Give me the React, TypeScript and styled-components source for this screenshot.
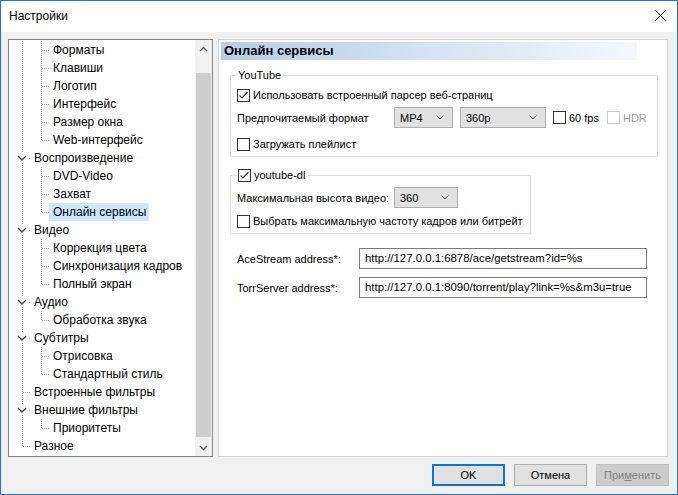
import React from "react";
import styled, { createGlobalStyle } from "styled-components";

const GlobalStyle = createGlobalStyle`
  html, body { margin: 0; padding: 0; background: #ffffff; }
  body {
    font-family: "Liberation Sans", Arial, sans-serif;
    font-size: 12px;
    color: #000;
  }
  * { box-sizing: border-box; }
`;

type TreeNode = {
  label: string;
  level: number;
  expander?: boolean;
  last?: boolean;
  selected?: boolean;
};

const tree: TreeNode[] = [
  { label: "Форматы", level: 1 },
  { label: "Клавиши", level: 1 },
  { label: "Логотип", level: 1 },
  { label: "Интерфейс", level: 1 },
  { label: "Размер окна", level: 1 },
  { label: "Web-интерфейс", level: 1, last: true },
  { label: "Воспроизведение", level: 0, expander: true },
  { label: "DVD-Video", level: 1 },
  { label: "Захват", level: 1 },
  { label: "Онлайн сервисы", level: 1, last: true, selected: true },
  { label: "Видео", level: 0, expander: true },
  { label: "Коррекция цвета", level: 1 },
  { label: "Синхронизация кадров", level: 1 },
  { label: "Полный экран", level: 1, last: true },
  { label: "Аудио", level: 0, expander: true },
  { label: "Обработка звука", level: 1, last: true },
  { label: "Субтитры", level: 0, expander: true },
  { label: "Отрисовка", level: 1 },
  { label: "Стандартный стиль", level: 1, last: true },
  { label: "Встроенные фильтры", level: 0 },
  { label: "Внешние фильтры", level: 0, expander: true },
  { label: "Приоритеты", level: 1, last: true },
  { label: "Разное", level: 0, last: true },
];

const Window = styled.div`
  width: 678px;
  height: 495px;
  border: 1px solid #1e74cf;
  display: flex;
  flex-direction: column;
  background: #f0f0f0;
`;

const TitleBar = styled.div`
  height: 31px;
  background: #ffffff;
  display: flex;
  align-items: center;
  justify-content: space-between;
  padding: 0 11px 2px 8px;
  font-size: 12px;
`;

const Body = styled.div`
  display: flex;
  gap: 5px;
  padding: 7px 9px 0 7px;
  height: 425px;
`;

const TreePanel = styled.div`
  width: 205px;
  height: 418px;
  border: 1px solid #828790;
  background: #fff;
  display: flex;
`;

const TreeList = styled.div`
  flex: 1;
  padding: 1px 0 0 3px;
`;

const TreeRow = styled.div`
  display: flex;
  height: 18px;
  align-items: center;
`;

const Cell = styled.svg`
  display: block;
  flex: none;
`;

const TreeLabel = styled.span<{ $selected?: boolean }>`
  height: 18px;
  line-height: 18px;
  padding: 0 3px 0 4px;
  white-space: nowrap;
  background: ${(p) => (p.$selected ? "#cce8ff" : "transparent")};
`;

const ScrollBar = styled.div`
  width: 17px;
  background: #f0f0f0;
  display: flex;
  flex-direction: column;
`;

const ScrollArrow = styled.div`
  height: 17px;
  display: flex;
  align-items: center;
  justify-content: center;
`;

const ScrollTrack = styled.div`
  flex: 1;
  display: flex;
  padding: 16px 1px 2px 1px;
`;

const ScrollThumb = styled.div`
  flex: 1;
  background: #cdcdcd;
`;

const Page = styled.div`
  width: 450px;
  height: 418px;
  border: 1px solid #d4d4d4;
  background: #ffffff;
  padding: 2px;
  font-size: 11px;
`;

const PageHeader = styled.div`
  width: 416px;
  height: 18px;
  line-height: 18px;
  padding-left: 3px;
  font-weight: bold;
  font-size: 13px;
  background: linear-gradient(to right, #b6cde8, #f4f8fc);
`;

const Group = styled.fieldset<{ $width: number; $top: number }>`
  width: ${(p) => p.$width}px;
  margin: ${(p) => p.$top}px 0 0 9px;
  padding: 0 6px 3px 6px;
  border: 1px solid #dcdcdc;
  min-width: 0;
`;

const Legend = styled.legend`
  padding: 0 2px 0 1px;
  height: 14px;
  line-height: 14px;
  display: flex;
  align-items: center;
  gap: 3px;
`;

const Row = styled.div<{ $top: number; $h?: number }>`
  display: flex;
  align-items: center;
  height: ${(p) => p.$h ?? 18}px;
  margin-top: ${(p) => p.$top}px;
`;

const FieldLabel = styled.span<{ $width: number }>`
  width: ${(p) => p.$width}px;
  flex: none;
  white-space: nowrap;
`;

const CheckLabel = styled.label<{ $disabled?: boolean; $gap?: number }>`
  display: flex;
  align-items: center;
  gap: 3px;
  margin-left: ${(p) => p.$gap ?? 0}px;
  white-space: nowrap;
  color: ${(p) => (p.$disabled ? "#a0a0a0" : "#000")};
`;

const Box = styled.span<{ $disabled?: boolean }>`
  width: 13px;
  height: 13px;
  flex: none;
  border: 1px solid ${(p) => (p.$disabled ? "#cccccc" : "#333333")};
  background: #fff;
  display: flex;
  align-items: center;
  justify-content: center;
`;

const Combo = styled.div<{ $width: number; $gap?: number }>`
  width: ${(p) => p.$width}px;
  height: 21px;
  flex: none;
  margin-left: ${(p) => p.$gap ?? 0}px;
  border: 1px solid #adadad;
  background: #e1e1e1;
  display: flex;
  align-items: center;
  justify-content: space-between;
  padding: 0 8px 0 5px;
`;

const AddressBlock = styled.div`
  margin: 14px 0 0 16px;
  display: flex;
  flex-direction: column;
  gap: 8px;
`;

const TextInput = styled.div`
  width: 288px;
  height: 21px;
  border: 1px solid #7a7a7a;
  background: #fff;
  padding: 0 5px;
  line-height: 19px;
  font-size: 11.4px;
  white-space: nowrap;
  overflow: hidden;
`;

const Footer = styled.div`
  display: flex;
  justify-content: flex-end;
  gap: 9px;
  padding: 7px 8px 8px 0;
  font-size: 11px;
`;

const Button = styled.div<{ $variant?: "default" | "disabled" }>`
  width: 73px;
  height: 22px;
  display: flex;
  align-items: center;
  justify-content: center;
  background: ${(p) => (p.$variant === "disabled" ? "#cccccc" : "#e1e1e1")};
  color: ${(p) => (p.$variant === "disabled" ? "#838383" : "#000")};
  border: ${(p) =>
    p.$variant === "default"
      ? "2px solid #0078d7"
      : p.$variant === "disabled"
      ? "1px solid #bfbfbf"
      : "1px solid #adadad"};
`;

const Chevron = ({ up }: { up?: boolean }) => (
  <svg width="9" height="6" viewBox="0 0 9 6">
    <polyline
      points={up ? "1,5 4.5,1.5 8,5" : "1,1 4.5,4.5 8,1"}
      fill="none"
      stroke="#606060"
      strokeWidth="1.4"
    />
  </svg>
);

const ComboArrow = () => (
  <svg width="8" height="5" viewBox="0 0 8 5">
    <polyline points="0.5,0.5 4,4 7.5,0.5" fill="none" stroke="#606060" strokeWidth="1" />
  </svg>
);

const Check = ({ checked, disabled }: { checked?: boolean; disabled?: boolean }) => (
  <Box $disabled={disabled}>
    {checked && (
      <svg width="11" height="11" viewBox="0 0 11 11">
        <polyline points="1.5,5.5 4,8 9.5,2" fill="none" stroke="#333" strokeWidth="1.2" />
      </svg>
    )}
  </Box>
);

const dots = { stroke: "#a0a0a0", strokeWidth: 1, strokeDasharray: "1 1" };

const Guide = () => (
  <Cell width="19" height="18">
    <line x1="10.5" y1="0" x2="10.5" y2="18" {...dots} />
  </Cell>
);

const Branch = ({ last, expander }: { last?: boolean; expander?: boolean }) => (
  <Cell width="18" height="18">
    <line x1="10.5" y1="0" x2="10.5" y2={last ? 9 : 18} {...dots} />
    <line x1="11" y1="9.5" x2="18" y2="9.5" {...dots} />
    {expander && (
      <>
        <rect x="4" y="4" width="13" height="10" fill="#fff" />
        <polyline points="6,7 10,11 14,7" fill="none" stroke="#404040" strokeWidth="1.4" />
      </>
    )}
  </Cell>
);

const TreeView = () => (
  <TreePanel>
    <TreeList>
      {tree.map((n) => (
        <TreeRow key={n.label}>
          {n.level === 1 && <Guide />}
          <Branch last={n.last} expander={n.expander} />
          <TreeLabel $selected={n.selected}>{n.label}</TreeLabel>
        </TreeRow>
      ))}
    </TreeList>
    <ScrollBar>
      <ScrollArrow>
        <Chevron up />
      </ScrollArrow>
      <ScrollTrack>
        <ScrollThumb />
      </ScrollTrack>
      <ScrollArrow>
        <Chevron />
      </ScrollArrow>
    </ScrollBar>
  </TreePanel>
);

const CloseIcon = () => (
  <svg width="11" height="11" viewBox="0 0 11 11">
    <path d="M0.5 0.5L10.5 10.5M10.5 0.5L0.5 10.5" stroke="#000" strokeWidth="1" />
  </svg>
);

export default function App() {
  return (
    <>
      <GlobalStyle />
      <Window>
        <TitleBar>
          <span>Настройки</span>
          <CloseIcon />
        </TitleBar>
        <Body>
          <TreeView />
          <Page>
            <PageHeader>Онлайн сервисы</PageHeader>

            <Group $width={428} $top={8}>
              <Legend>YouTube</Legend>
              <Row $top={4}>
                <CheckLabel>
                  <Check checked />
                  Использовать встроенный парсер веб-страниц
                </CheckLabel>
              </Row>
              <Row $top={3} $h={21}>
                <FieldLabel $width={157}>Предпочитаемый формат</FieldLabel>
                <Combo $width={59}>
                  <span>MP4</span>
                  <ComboArrow />
                </Combo>
                <Combo $width={86} $gap={7}>
                  <span>360p</span>
                  <ComboArrow />
                </Combo>
                <CheckLabel $gap={7}>
                  <Check />
                  60 fps
                </CheckLabel>
                <CheckLabel $disabled $gap={8}>
                  <Check disabled />
                  HDR
                </CheckLabel>
              </Row>
              <Row $top={7}>
                <CheckLabel>
                  <Check />
                  Загружать плейлист
                </CheckLabel>
              </Row>
            </Group>

            <Group $width={301} $top={11}>
              <Legend>
                <Check checked />
                youtube-dl
              </Legend>
              <Row $top={5} $h={21}>
                <FieldLabel $width={157}>Максимальная высота видео:</FieldLabel>
                <Combo $width={64}>
                  <span>360</span>
                  <ComboArrow />
                </Combo>
              </Row>
              <Row $top={4}>
                <CheckLabel>
                  <Check />
                  Выбрать максимальную частоту кадров или битрейт
                </CheckLabel>
              </Row>
            </Group>

            <AddressBlock>
              <Row $top={0} $h={21}>
                <FieldLabel $width={122}>AceStream address*:</FieldLabel>
                <TextInput>http://127.0.0.1:6878/ace/getstream?id=%s</TextInput>
              </Row>
              <Row $top={0} $h={21}>
                <FieldLabel $width={122}>TorrServer address*:</FieldLabel>
                <TextInput>http://127.0.0.1:8090/torrent/play?link=%s&amp;m3u=true</TextInput>
              </Row>
            </AddressBlock>
          </Page>
        </Body>
        <Footer>
          <Button $variant="default">OK</Button>
          <Button>Отмена</Button>
          <Button $variant="disabled">
            <span>
              При<u>м</u>енить
            </span>
          </Button>
        </Footer>
      </Window>
    </>
  );
}
